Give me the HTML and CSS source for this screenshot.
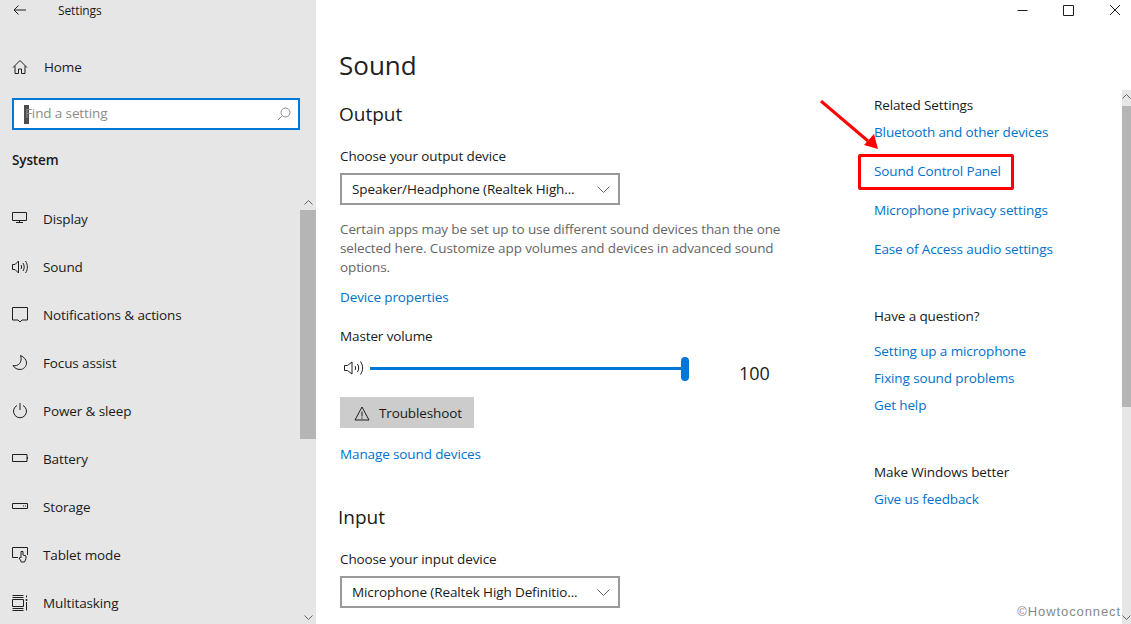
FILE: index.html
```html
<!DOCTYPE html>
<html lang="en">
<head>
<meta charset="utf-8">
<title>Settings</title>
<link rel="stylesheet" href="styles.css">
</head>
<body>
<div class="window">
  <aside class="sidebar">
    <div class="titlebar">
      <svg class="back" width="16" height="14" viewBox="0 0 16 14"><path d="M14 7H2M6.500 2.500 2 7l4.500 4.500"/></svg>
      <span class="apptitle">Settings</span>
    </div>
    <div class="home">
      <svg class="ico" width="16" height="16" viewBox="0 0 16 16"><path d="M1 8.500 8 1.500l7 7M3 7v7.500h3.500V10h3v4.500H13V7"/></svg>
      <span>Home</span>
    </div>
    <div class="search">
      <span class="caret"></span>
      <span class="placeholder">Find a setting</span>
      <svg class="mag" width="14" height="14" viewBox="0 0 14 14"><circle cx="8.500" cy="5.500" r="4.500"/><path d="M5.300 8.700 1 13"/></svg>
    </div>
    <div class="system">System</div>
    <div class="navarea">
      <nav class="nav">
        <div class="item"><svg class="ico" width="16" height="16" viewBox="0 0 16 16"><path d="M.5 1.500h14v8H.5zM7.500 9.500v2.500M4 11.500h7"/></svg><span>Display</span></div>
        <div class="item"><svg class="ico" width="16" height="16" viewBox="0 0 16 16"><path d="M.5 5.500h2.500L6.500 2v12L3 10.500H.5zM9 6c.8 1.200.8 2.800 0 4M11 4c1.600 2.400 1.600 5.600 0 8M13.500 2c2.500 3.500 2.500 8.500 0 12"/></svg><span>Sound</span></div>
        <div class="item"><svg class="ico" width="16" height="16" viewBox="0 0 16 16"><path d="M.5 .5h15v12.500H10L8 15 6 13H.5z"/></svg><span>Notifications &amp; actions</span></div>
        <div class="item"><svg class="ico" width="16" height="16" viewBox="0 0 16 16"><path d="M8.500 .5c3.500 1.500 6 4 6 7.500 0 3.500-3 6.500-6.500 6.500-3 0-5.500-1.500-7-4 5 1.500 10-3.500 7.500-10z"/></svg><span>Focus assist</span></div>
        <div class="item"><svg class="ico" width="16" height="16" viewBox="0 0 16 16"><path d="M5 2.500a6.500 6.500 0 1 0 6 0M8 0v7"/></svg><span>Power &amp; sleep</span></div>
        <div class="item"><svg class="ico" width="16" height="16" viewBox="0 0 16 16"><path d="M.5 3.500h14.500v7H.5zM15.500 6v2"/></svg><span>Battery</span></div>
        <div class="item"><svg class="ico" width="16" height="16" viewBox="0 0 16 16"><path d="M.5 4.500h15v5H.5zM11 7h1M13 7h1"/></svg><span>Storage</span></div>
        <div class="item"><svg class="ico" width="16" height="16" viewBox="0 0 16 16"><path d="M6 10.500H.5v-10h15V8M9 14l-2-3 1.500-.5.500.5V4.500h2V8l3 1v2.500l-1.500 3.500H9z"/></svg><span>Tablet mode</span></div>
        <div class="item"><svg class="ico" width="16" height="16" viewBox="0 0 16 16"><path d="M.5 4.500h11v7H.5zM.5 .5h11M.5 2.500h11M.5 13.500h11M.5 15.500h11M14.500 .5v2M14.500 7v8.500"/><circle class="dot" cx="14.500" cy="5" r="1"/></svg><span>Multitasking</span></div>
      </nav>
      <div class="sidescroll">
        <svg class="chev" width="9" height="5" viewBox="0 0 9 5"><path d="M.5 4.500l4-4 4 4"/></svg>
        <div class="sidethumb"></div>
        <svg class="chev bottom" width="9" height="5" viewBox="0 0 9 5"><path d="M.5 .5l4 4 4-4"/></svg>
      </div>
    </div>
  </aside>

  <main class="main">
    <div class="winbar">
      <svg class="wc" width="11" height="11" viewBox="0 0 11 11"><path d="M.5 5.500h10"/></svg>
      <svg class="wc" width="11" height="11" viewBox="0 0 11 11"><path d="M.5 .5h10v10H.5z"/></svg>
      <svg class="wc" width="12" height="12" viewBox="0 0 12 12"><path d="M1 1l10 10M11 1 1 11"/></svg>
    </div>
    <div class="body">
      <section class="content">
        <h1>Sound</h1>
        <h2>Output</h2>
        <div class="label first">Choose your output device</div>
        <div class="select"><span>Speaker/Headphone (Realtek High...</span><svg class="selchev" width="13" height="7" viewBox="0 0 13 7"><path d="M.5 .5l6 6 6-6"/></svg></div>
        <p class="desc">Certain apps may be set up to use different sound devices than the one<br>selected here. Customize app volumes and devices in advanced sound<br>options.</p>
        <a class="link devprops">Device properties</a>
        <div class="label master">Master volume</div>
        <div class="volume">
          <svg class="ico volico" width="21" height="16" viewBox="0 0 21 16"><path d="M.5 5.500h3L8 2v12l-4.500-3.500h-3zM11 6c.8 1.200.8 2.800 0 4M13.500 4c1.600 2.400 1.600 5.600 0 8M16.500 1.500c2.800 4 2.800 9 0 13"/></svg>
          <div class="track"><div class="thumb"></div></div>
          <span class="volnum">100</span>
        </div>
        <div class="button">
          <svg class="ico" width="16" height="15" viewBox="0 0 16 15"><path d="M8 1 15 14H1zM8 5.500v5M8 11.500v1.200"/></svg>
          <span>Troubleshoot</span>
        </div>
        <a class="link manage">Manage sound devices</a>
        <h2 class="input">Input</h2>
        <div class="label inlabel">Choose your input device</div>
        <div class="select"><span>Microphone (Realtek High Definitio...</span><svg class="selchev" width="13" height="7" viewBox="0 0 13 7"><path d="M.5 .5l6 6 6-6"/></svg></div>
      </section>
      <section class="related">
        <div class="rhead">Related Settings</div>
        <a class="link r1">Bluetooth and other devices</a>
        <a class="link r2 marked">Sound Control Panel</a>
        <a class="link r2">Microphone privacy settings</a>
        <a class="link r2">Ease of Access audio settings</a>
        <div class="rhead gap1">Have a question?</div>
        <a class="link q1">Setting up a microphone</a>
        <a class="link q2">Fixing sound problems</a>
        <a class="link q2">Get help</a>
        <div class="rhead gap2">Make Windows better</div>
        <a class="link r1">Give us feedback</a>
      </section>
      <div class="mainscroll">
        <svg class="chev" width="9" height="5" viewBox="0 0 9 5"><path d="M.5 4.500l4-4 4 4"/></svg>
        <div class="mainthumb"></div>
        <svg class="chev bottom" width="9" height="5" viewBox="0 0 9 5"><path d="M.5 .5l4 4 4-4"/></svg>
      </div>
    </div>
  </main>
</div>
<div class="redbox"></div>
<svg class="arrow" width="70" height="60" viewBox="0 0 70 60"><path class="shaft" d="M1 1 48 41"/><path class="head" d="M58 49 44 45 54 34z"/></svg>
<div class="credit">©Howtoconnect</div>
</body>
</html>
```
FILE: styles.css
```css
* { box-sizing: border-box; }
html, body { margin: 0; height: 624px; overflow: hidden; }
body { position: relative; background: #fff; color: #1a1a1a; font: 13.5px/19px "Open Sans", "Noto Sans", sans-serif; letter-spacing: -.12px; }
svg { display: block; fill: none; stroke: #1f1f1f; stroke-width: 1; flex: none; }
.window { display: flex; height: 624px; }

.sidebar { width: 316px; flex: none; background: #e6e6e6; display: flex; flex-direction: column; }
.titlebar { display: flex; align-items: center; height: 21px; padding-left: 12px; }
.back { margin-bottom: 1px; }
.apptitle { font-size: 12px; margin-left: 30px; }
.home { display: flex; align-items: center; gap: 16px; margin-top: 36px; padding-left: 12px; height: 20px; }
.search { display: flex; align-items: center; margin: 21px 16px 0 12px; height: 32px; background: #fff; border: 2px solid #0078d7; padding: 0 7px 0 10px; }
.caret { width: 5px; height: 19px; background: #4d4d4d; flex: none; }
.placeholder { flex: 1; margin-left: -4px; padding-bottom: 2px; color: #8a8a8a; }
.mag { stroke: #8a8a8a; }
.system { margin: 21px 0 0 12px; font-weight: 600; height: 19px; }
.navarea { display: flex; flex: 1; min-height: 0; margin-top: 25px; }
.nav { flex: 1; padding: 0 0 0 12px; }
.item { display: flex; align-items: center; gap: 15px; height: 48px; }
.sidescroll { width: 16px; display: flex; flex-direction: column; align-items: center; }
.sidescroll .chev { margin-top: 5px; stroke: #666; }
.sidethumb { align-self: stretch; height: 229px; margin-top: 5px; background: #b5b5b5; }

.main { flex: 1; min-width: 0; display: flex; flex-direction: column; }
.winbar { display: flex; justify-content: flex-end; align-items: center; gap: 35px; height: 20px; padding-right: 10px; }
.body { flex: 1; display: flex; min-height: 0; }
.content { width: 542px; flex: none; padding-left: 24px; }
h1 { margin: 27px 0 0 -1px; font-size: 26px; line-height: 36px; font-weight: 400; letter-spacing: 0; color: #222; }
h2 { margin: 17px 0 0 -1px; font-size: 19px; line-height: 28px; font-weight: 400; letter-spacing: 0; }
.label { height: 19px; }
.label.first { margin-top: 19px; }
.select { display: flex; align-items: center; justify-content: space-between; width: 280px; height: 32px; margin-top: 7px; padding: 0 8px 0 10px; border: 2px solid #999; }
.selchev { stroke: #666; }
.desc { margin: 15px 0 0; color: #666; }
.link { display: block; color: #0072cc; height: 19px; }
.devprops { margin-top: 11px; }
.master { margin-top: 20px; }
.volume { display: flex; align-items: center; height: 26px; margin-top: 9px; }
.volico { margin-left: 4px; }
.track { position: relative; width: 315px; height: 3px; margin-left: 5px; background: #0078d7; }
.thumb { position: absolute; right: -4px; top: -10px; width: 8px; height: 24px; border-radius: 4px; background: #0078d7; }
.volnum { font-size: 18px; letter-spacing: 0; margin: 10px 0 0 54px; }
.button { display: flex; align-items: center; gap: 9px; width: 134px; height: 31px; margin-top: 16px; padding: 1px 0 0 14px; background: #ccc; }
.manage { margin-top: 17px; }
h2.input { margin: 39px 0 0 -2px; }
.label.inlabel { margin-top: 19px; }

.related { flex: 1; min-width: 0; padding: 76px 0 0 16px; }
.rhead { height: 19px; }
.r1 { margin-top: 8px; }
.r2 { margin-top: 20px; }
.gap1 { margin-top: 48px; }
.q1 { margin-top: 16px; }
.q2 { margin-top: 8px; }
.gap2 { margin-top: 48px; }

.mainscroll { width: 9px; flex: none; margin-top: 70px; background: #e6e6e6; display: flex; flex-direction: column; align-items: center; }
.mainscroll .chev { margin-top: 4px; stroke: #666; }
.mainthumb { align-self: stretch; height: 301px; margin-top: 7px; background: #b5b5b5; }
.sidescroll .chev.bottom, .mainscroll .chev.bottom { margin-top: auto; margin-bottom: 4px; }

.redbox { position: absolute; left: 858px; top: 154px; width: 156px; height: 36px; border: 3px solid #ff0000; border-radius: 2px; }
.arrow { position: absolute; left: 820px; top: 100px; }
.arrow .shaft { stroke: #ff0000; stroke-width: 3; }
.arrow .head { fill: #ff0000; stroke: none; }
.dot { fill: #1f1f1f; stroke: none; }
.credit { position: absolute; right: 10px; bottom: 4px; font: 13px/16px "Liberation Sans", sans-serif; letter-spacing: .9px; color: #888; }
```
